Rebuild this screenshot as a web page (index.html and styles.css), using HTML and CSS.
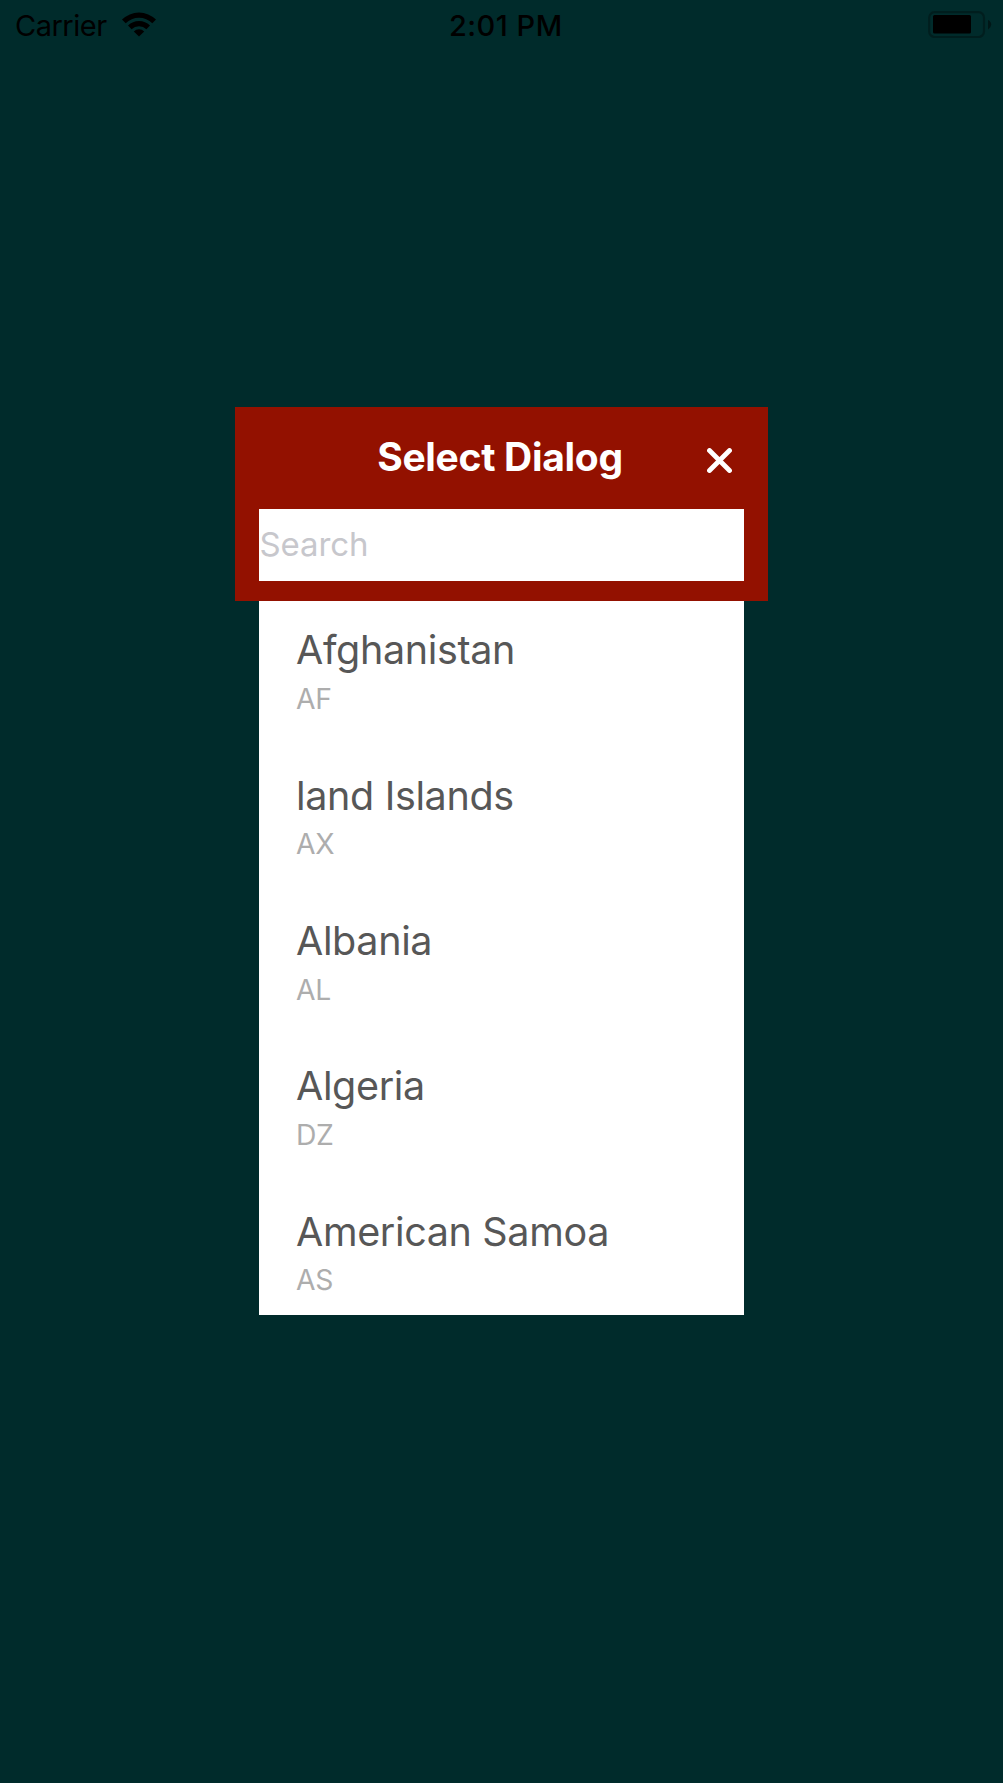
FILE: index.html
```html
<!DOCTYPE html>
<html lang="en">
<head>
<meta charset="utf-8">
<title>Select Dialog</title>
<link rel="stylesheet" href="styles.css">
</head>
<body>
<div class="status-bar">
  <div class="carrier">
    <span class="carrier-name">Carrier</span>
    <svg class="wifi" width="36" height="26" viewBox="0 0 36 26">
      <path d="M1 7.6A24 24 0 0 1 35 7.6L31.3 11.3A18.8 18.8 0 0 0 4.7 11.3Z"/>
      <path d="M7 13.6A15.6 15.6 0 0 1 29 13.6L25.4 17.2A10.5 10.5 0 0 0 10.6 17.2Z"/>
      <path d="M12.8 19.4A7.4 7.4 0 0 1 23.2 19.4L18 24.6Z"/>
    </svg>
  </div>
  <span class="time">2:01 PM</span>
  <svg class="battery" width="64" height="27" viewBox="0 0 64 27">
    <rect class="battery-shell" x="1.2" y="1.2" width="54.8" height="24.8" rx="5.5"/>
    <rect x="5" y="4" width="38" height="18.5" rx="1.5"/>
    <path class="battery-cap" d="M60 9Q63.2 10.5 63.2 13.5T60 18.5Z"/>
  </svg>
</div>
<main class="dialog">
  <header class="dialog-header">
    <div class="title-row">
      <h1 class="title">Select Dialog</h1>
      <button class="close" aria-label="Close">
        <svg width="25" height="25" viewBox="0 0 25 25"><path d="M2.5 2.5L22.5 22.5M22.5 2.5L2.5 22.5"/></svg>
      </button>
    </div>
    <input class="search" type="text" placeholder="Search">
  </header>
  <ul class="list">
    <li class="item"><span class="name">Afghanistan</span><span class="code">AF</span></li>
    <li class="item"><span class="name">land Islands</span><span class="code">AX</span></li>
    <li class="item"><span class="name">Albania</span><span class="code">AL</span></li>
    <li class="item"><span class="name">Algeria</span><span class="code">DZ</span></li>
    <li class="item"><span class="name">American Samoa</span><span class="code">AS</span></li>
  </ul>
</main>
</body>
</html>
```
FILE: styles.css
```css
* { box-sizing: border-box; }

body {
  margin: 0;
  height: 1783px;
  overflow: hidden;
  background: #002b2b;
  color: #000;
  font-family: "Inter", "Liberation Sans", sans-serif;
}

.status-bar {
  display: grid;
  grid-template-columns: 1fr auto 1fr;
  align-items: start;
  height: 50px;
  padding: 0 11.5px 0 15px;
  font-size: 29px;
  line-height: 52px;
}

.carrier { display: flex; gap: 14px; }
.carrier-name { letter-spacing: -0.5px; }
.wifi { margin-top: 11.5px; }
.time { font-weight: 500; letter-spacing: 0.5px; margin-left: 5px; }
.battery { justify-self: end; margin-top: 11px; }
.battery-shell { fill: none; stroke: #001e1e; stroke-width: 2.2; }
.battery-cap { fill: #001717; }

.dialog {
  width: 533px;
  margin: 357px 0 0 235px;
}

.dialog-header {
  height: 194px;
  padding: 26px 24px 0;
  background: #931100;
}

.title-row {
  display: grid;
  grid-template-columns: 1fr auto 1fr;
  height: 76px;
}

.title {
  grid-column: 2;
  margin: 0;
  color: #fff;
  font-size: 39px;
  font-weight: 700;
  letter-spacing: -0.3px;
  line-height: 48px;
  margin-right: 3px;
}

.close {
  justify-self: end;
  align-self: start;
  width: 25px;
  height: 25px;
  margin: 15px 12px 0 0;
  padding: 0;
  border: 0;
  background: none;
}

.close svg {
  display: block;
  fill: none;
  stroke: #fff;
  stroke-width: 4.8;
  stroke-linecap: round;
}

.search {
  display: block;
  width: 485px;
  height: 72px;
  padding: 0 0 3px 0.5px;
  border: 0;
  border-radius: 0;
  outline: 0;
  background: #fff;
  font: 400 33px "Inter", "Liberation Sans", sans-serif;
  letter-spacing: -0.1px;
}

.search::placeholder { color: #c7c7cc; opacity: 1; }

.list {
  width: 485px;
  height: 714px;
  margin: 0 24px;
  padding: 0;
  overflow: hidden;
  background: #fff;
  list-style: none;
}

.item {
  display: flex;
  flex-direction: column;
  gap: 7.5px;
  height: 145.4px;
  padding: 25.3px 37px 0;
}

.name {
  color: #575757;
  font-size: 39.5px;
  line-height: 48px;
  letter-spacing: -0.35px;
}

.code {
  color: #adadad;
  font-size: 28.3px;
  line-height: 34px;
  letter-spacing: -0.3px;
}
```
